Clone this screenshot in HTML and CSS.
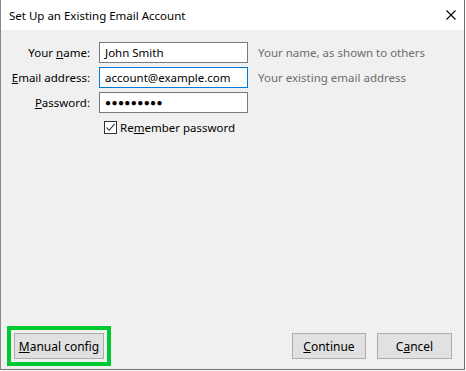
FILE: index.html
```html
<!DOCTYPE html>
<html>

<head>
    <title>Set Up an Existing Email Account</title>
    <link rel="stylesheet" href="styles.css">
</head>

<body>
    <div class="window">
        <!-- title bar -->
        <div class="titlebar">
            <span class="title">Set Up an Existing Email Account</span>
            <svg class="close" width="10" height="10" viewBox="0 0 10 10">
                <path d="M0.5 0.5 L9.5 9.5 M9.5 0.5 L0.5 9.5" stroke="#000" stroke-width="1.1" fill="none"/>
            </svg>
        </div>

        <div class="content">
            <!-- form -->
            <div class="form">
                <label class="label">Your <u>n</u>ame:</label>
                <div class="field">John Smith</div>
                <span class="hint">Your name, as shown to others</span>

                <label class="label"><u>E</u>mail address:</label>
                <div class="field focused">account@example.com</div>
                <span class="hint">Your existing email address</span>

                <label class="label"><u>P</u>assword:</label>
                <div class="field dots">●●●●●●●●●</div>
                <span class="hint"></span>

                <span></span>
                <div class="remember">
                    <span class="checkbox">
                        <svg width="11" height="11" viewBox="0 0 11 11">
                            <path d="M1.5 5.5 L4.2 8.3 L9.6 1.8" stroke="#333" stroke-width="1.1" fill="none"/>
                        </svg>
                    </span>
                    <span>Re<u>m</u>ember password</span>
                </div>
            </div>

            <!-- buttons -->
            <div class="footer">
                <div class="highlight">
                    <button class="btn manual"><u>M</u>anual config</button>
                </div>
                <div class="right_buttons">
                    <button class="btn continue"><u>C</u>ontinue</button>
                    <button class="btn cancel">C<u>a</u>ncel</button>
                </div>
            </div>
        </div>
    </div>
</body>

</html>
```

FILE: styles.css
```css
/* Dialog styles */
* {
    margin: 0;
    padding: 0;
    box-sizing: border-box;
}

body {
    background: #fff;
    font-family: "Noto Sans", sans-serif;
    font-size: 11px;
    color: #000;
}

.window {
    width: 465px;
    height: 370px;
    border-left: 1px solid #888;
    border-right: 1px solid #707070;
    border-bottom: 1px solid #707070;
    display: flex;
    flex-direction: column;
}

.titlebar {
    height: 30px;
    background: #fff;
    display: flex;
    align-items: center;
    justify-content: space-between;
    padding-left: 8px;
    padding-right: 8px;
}

.title {
    font-size: 11.5px;
}

.content {
    flex: 1;
    background: #f0f0f0;
    display: flex;
    flex-direction: column;
    padding-top: 12px;
}

.form {
    display: grid;
    grid-template-columns: 82px 149px auto;
    grid-auto-rows: 21px;
    column-gap: 9px;
    row-gap: 4px;
    padding-left: 7px;
    align-items: center;
    font-size: 11.5px;
}

.label {
    text-align: right;
    white-space: nowrap;
}

.field {
    height: 21px;
    background: #fff;
    border: 1px solid #7a7a7a;
    padding-left: 5px;
    line-height: 19px;
    white-space: nowrap;
    overflow: hidden;
}

.field.focused {
    border-color: #0078d7;
}

.field.dots {
    font-size: 10px;
    letter-spacing: 0.4px;
}

.hint {
    color: #6d6d6d;
    white-space: nowrap;
    padding-left: 1px;
}

.remember {
    display: flex;
    align-items: center;
    gap: 3px;
    padding-left: 5px;
}

.checkbox {
    width: 13px;
    height: 13px;
    border: 1px solid #333;
    background: #fff;
    display: flex;
    align-items: center;
    justify-content: center;
}

.footer {
    margin-top: auto;
    display: flex;
    justify-content: space-between;
    align-items: flex-end;
    padding-left: 6px;
    padding-right: 12px;
    padding-bottom: 3px;
}

.highlight {
    border: 4px solid #00c832;
    padding: 3px;
}

.btn {
    height: 26px;
    background: #e1e1e1;
    border: 1px solid #adadad;
    font-family: "Noto Sans", sans-serif;
    font-size: 12px;
    color: #000;
}

.manual {
    width: 90px;
}

.right_buttons {
    display: flex;
    gap: 11px;
    padding-bottom: 7px;
}

.continue {
    width: 74px;
}

.cancel {
    width: 75px;
}
```
